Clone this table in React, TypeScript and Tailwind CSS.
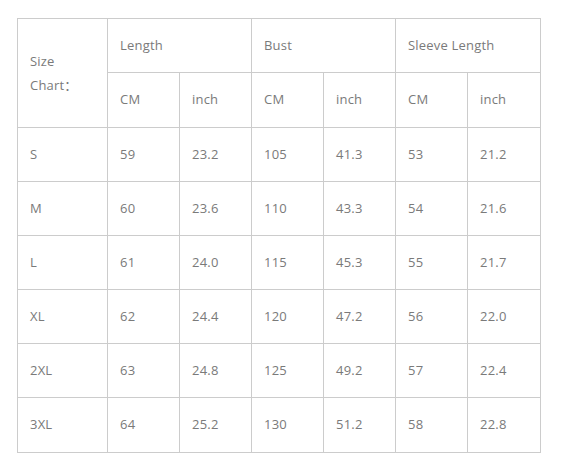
const rows = [
  ['S', '59', '23.2', '105', '41.3', '53', '21.2'],
  ['M', '60', '23.6', '110', '43.3', '54', '21.6'],
  ['L', '61', '24.0', '115', '45.3', '55', '21.7'],
  ['XL', '62', '24.4', '120', '47.2', '56', '22.0'],
  ['2XL', '63', '24.8', '125', '49.2', '57', '22.4'],
  ['3XL', '64', '25.2', '130', '51.2', '58', '22.8'],
];

const cell = 'border border-[#cccccc] px-3 text-left align-middle font-normal';

export default function App() {
  return (
    <div className="min-h-screen bg-white pt-[18px] pl-[17px] font-['Open_Sans','Noto_Sans_CJK_SC',sans-serif] text-[13px] tracking-[0.2px] text-[#7a7a7a]">
      <table className="table-fixed border-collapse w-[523px]">
        <colgroup>
          <col className="w-[90px]" />
          <col className="w-[72px]" />
          <col className="w-[72px]" />
          <col className="w-[72px]" />
          <col className="w-[72px]" />
          <col className="w-[72px]" />
          <col className="w-[73px]" />
        </colgroup>
        <thead>
          <tr className="h-[54px]">
            <th rowSpan={2} className={`${cell} leading-[24px]`}>
              Size
              <br />
              Chart：
            </th>
            <th colSpan={2} className={cell}>Length</th>
            <th colSpan={2} className={cell}>Bust</th>
            <th colSpan={2} className={cell}>Sleeve Length</th>
          </tr>
          <tr className="h-[55px]">
            <th className={cell}>CM</th>
            <th className={cell}>inch</th>
            <th className={cell}>CM</th>
            <th className={cell}>inch</th>
            <th className={cell}>CM</th>
            <th className={cell}>inch</th>
          </tr>
        </thead>
        <tbody>
          {rows.map((r, i) => (
            <tr key={r[0]} className={i === rows.length - 1 ? 'h-[55px]' : 'h-[54px]'}>
              {r.map((v, j) => (
                <td key={j} className={cell}>
                  {v}
                </td>
              ))}
            </tr>
          ))}
        </tbody>
      </table>
    </div>
  );
}
